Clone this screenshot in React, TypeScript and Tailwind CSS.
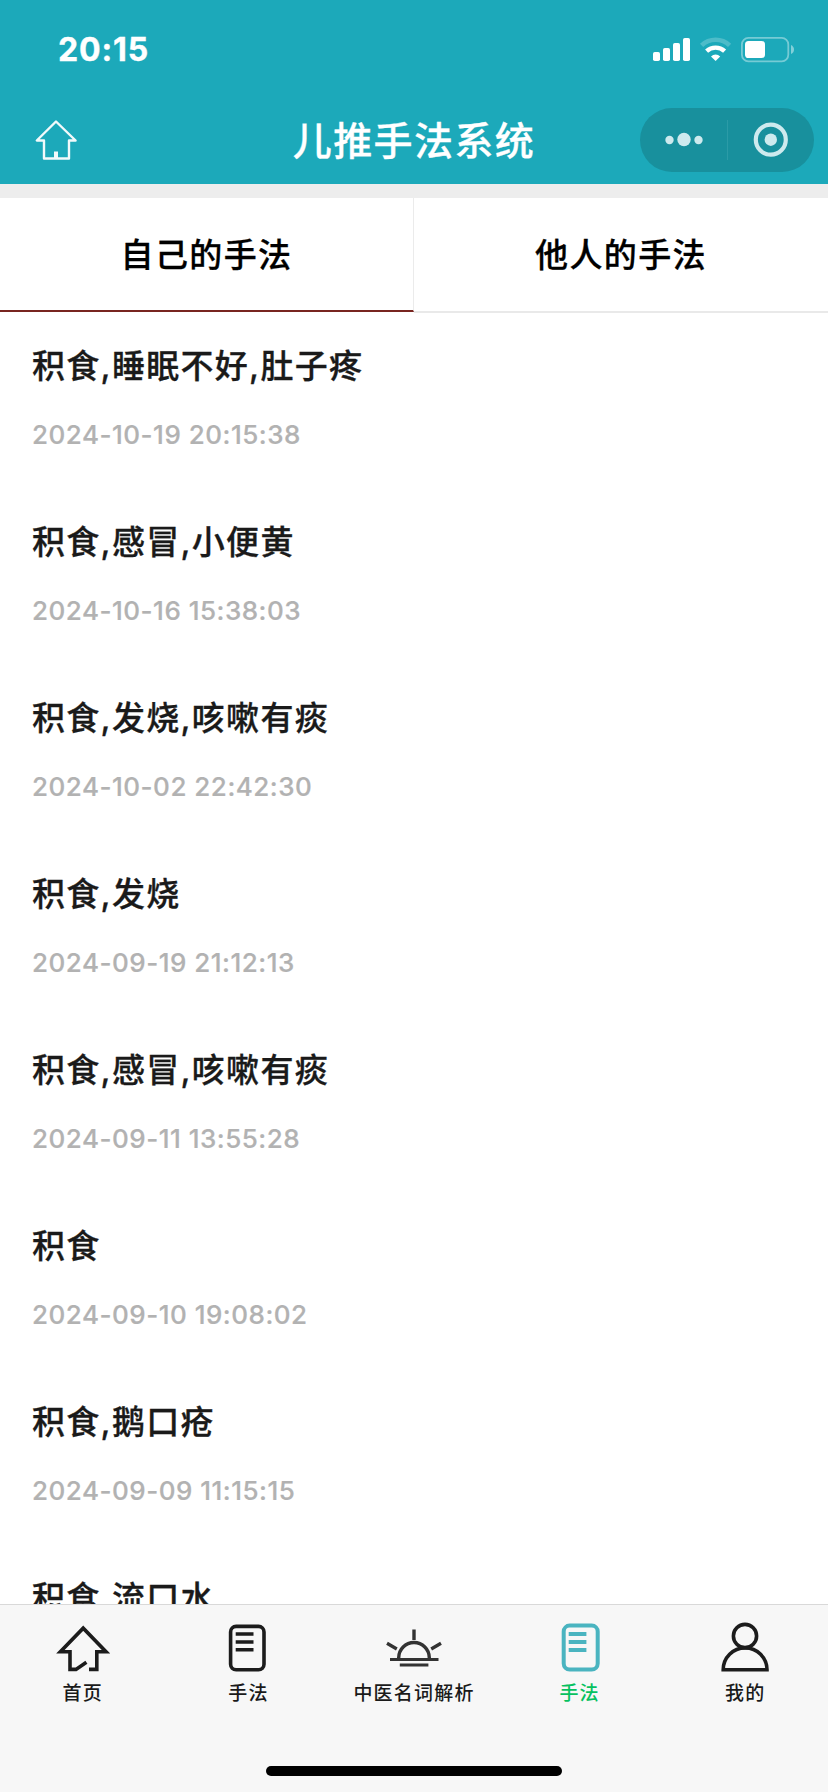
import { useState } from 'react'

const records = [
  { id: 1, title: '积食,睡眠不好,肚子疼', time: '2024-10-19 20:15:38' },
  { id: 2, title: '积食,感冒,小便黄', time: '2024-10-16 15:38:03' },
  { id: 3, title: '积食,发烧,咳嗽有痰', time: '2024-10-02 22:42:30' },
  { id: 4, title: '积食,发烧', time: '2024-09-19 21:12:13' },
  { id: 5, title: '积食,感冒,咳嗽有痰', time: '2024-09-11 13:55:28' },
  { id: 6, title: '积食', time: '2024-09-10 19:08:02' },
  { id: 7, title: '积食,鹅口疮', time: '2024-09-09 11:15:15' },
  { id: 8, title: '积食,流口水', time: '' },
]

const tabs = ['自己的手法', '他人的手法']

const HouseIcon = () => (
  <svg className="h-14 w-14" viewBox="0 0 56 56" fill="none" stroke="#1c1c1c" strokeWidth="3.6">
    <path d="M34 49.4h7.8V31.7H51L28.2 8.2 5.4 31.7H15v17.7h6l10.4-7.2" />
  </svg>
)

const NoteIcon = () => (
  <svg className="h-14 w-14" viewBox="0 0 56 56" fill="none" stroke="#1c1c1c" strokeWidth="3.6">
    <rect x="10.6" y="6.4" width="33.4" height="43.4" rx="5.5" />
    <path d="M15.7 14h17.8M15.7 22h17.8M15.7 29.8h17.8" />
  </svg>
)

const NoteActiveIcon = () => (
  <svg className="h-14 w-14" viewBox="0 0 56 56" fill="none" stroke="#4ab4c0" strokeWidth="4">
    <rect x="11.7" y="5.6" width="34" height="44" rx="6" />
    <path d="M16.7 14h17.7M16.7 22h17.7M16.7 30h17.7" />
  </svg>
)

const SunIcon = () => (
  <svg className="h-14 w-14" viewBox="0 0 56 56" fill="none" stroke="#333" strokeWidth="3.4">
    <path d="M28 9.5V20M1 23.3l9.8 5.6M55 23.3l-9.8 5.6" />
    <path d="M12.7 39v-1.2a15.3 15.3 0 0 1 30.6 0V39" />
    <path d="M4 39.6h48.5M13.8 45h28.6" strokeWidth="3" />
  </svg>
)

const UserIcon = () => (
  <svg className="h-14 w-14" viewBox="0 0 56 56" fill="none" stroke="#1c1c1c" strokeWidth="3.6">
    <circle cx="28" cy="16" r="11.6" />
    <path d="M6.2 49.8a21.8 21.8 0 0 1 43.8 0z" />
  </svg>
)

const menus = [
  { id: 'home', label: '首页', icon: <HouseIcon /> },
  { id: 'note', label: '手法', icon: <NoteIcon /> },
  { id: 'terms', label: '中医名词解析', icon: <SunIcon /> },
  { id: 'mine-note', label: '手法', icon: <NoteActiveIcon />, active: true },
  { id: 'me', label: '我的', icon: <UserIcon /> },
]

const StatusBar = () => (
  <div className="flex h-[100px] items-center justify-between pl-[58px] pr-[33px]">
    <span className="text-[32px] leading-none font-bold tracking-[0.9px] [-webkit-text-stroke:0.4px]">20:15</span>
    <svg className="h-[28px] w-[143px]" viewBox="652 36 143 28" fill="#fff">
      <rect x="653" y="52" width="7" height="9" rx="1.8" />
      <rect x="663" y="48" width="7" height="13" rx="1.8" />
      <rect x="673" y="43" width="7" height="18" rx="1.8" />
      <rect x="683" y="38" width="7" height="23" rx="1.8" />
      <path d="M701.6 45.4a20 20 0 0 1 28 0" fill="none" stroke="#fff" strokeOpacity=".22" strokeWidth="4.6" />
      <path d="M706.6 51.2a13.2 13.2 0 0 1 18 0" fill="none" stroke="#fff" strokeWidth="4.4" />
      <path d="M715.6 61l-4.6-4.6a6.8 6.8 0 0 1 9.2 0z" />
      <rect x="741.9" y="37.9" width="46.4" height="23.4" rx="6.5" fill="none" stroke="#fff" strokeOpacity=".4" strokeWidth="1.8" />
      <rect x="745" y="41" width="20" height="17" rx="3.6" />
      <path d="M791 45q3 1.5 3 4.5t-3 4.5z" fillOpacity=".45" />
    </svg>
  </div>
)

const NavBar = () => (
  <div className="grid h-[84px] grid-cols-[1fr_auto_1fr] items-center px-[14px] pb-[4px]">
    <svg className="ml-[21px] h-[42px] w-[42px]" viewBox="35 119 42 42" fill="none" stroke="#f2fafb" strokeWidth="2.4" strokeLinejoin="round">
      <path d="M56 121.5L36.8 140.5H44V158.5H69V140.5H75.6z" />
      <path d="M56 151.5V158" strokeWidth="4" />
    </svg>
    <h1 className="text-[39px] leading-none font-medium tracking-[1.4px] [-webkit-text-stroke:0.3px]">儿推手法系统</h1>
    <div className="flex h-16 w-[174px] items-center justify-self-end rounded-full bg-[#18909d]">
      <svg className="h-16 w-[174px]" viewBox="640 108 174 64" fill="#cdeaee">
        <circle cx="669.5" cy="140" r="4.2" />
        <circle cx="684" cy="139.5" r="6.7" />
        <circle cx="698.5" cy="140" r="4.2" />
        <path d="M727.5 120V160" stroke="#2b9ba7" />
        <circle cx="770.8" cy="139.7" r="15" fill="none" stroke="#cdeaee" strokeWidth="4.2" />
        <circle cx="770.8" cy="139.7" r="6.2" />
      </svg>
    </div>
  </div>
)

export default function App() {
  const [current, setCurrent] = useState(0)

  return (
    <main className="flex h-[1792px] w-[828px] flex-col overflow-hidden bg-white font-['Inter','Noto_Sans_CJK_SC',sans-serif]">
      <header className="h-[184px] shrink-0 bg-[#1ca9ba] text-white">
        <StatusBar />
        <NavBar />
      </header>

      <div className="h-[14px] shrink-0 bg-[#ededed]"></div>

      <div className="grid h-[115px] shrink-0 grid-cols-2">
        {tabs.map((tab, i) => (
          <button
            key={tab}
            onClick={() => setCurrent(i)}
            className={
              'flex items-center justify-center text-[33px] leading-none font-medium tracking-[1.4px] text-black [-webkit-text-stroke:0.3px] ' +
              (i === current
                ? 'mb-px border-b-2 border-r border-b-[#782520] border-r-[#ebebeb] pt-[2px]'
                : 'border-b-2 border-b-[#e9e9e9] pt-px')
            }
          >
            {tab}
          </button>
        ))}
      </div>

      <ul className="min-h-0 flex-1 overflow-hidden pl-8">
        {records.map((item) => (
          <li key={item.id} className="h-44 pt-[29px]">
            <h2 className="text-[33px] leading-[48px] font-medium tracking-[1.3px] text-[#1a1a1a] [-webkit-text-stroke:0.3px]">{item.title}</h2>
            <p className="mt-[27px] text-[26px] leading-[36px] font-medium tracking-[0.5px] text-[#b2b2b2] [-webkit-text-stroke:0.2px]">{item.time}</p>
          </li>
        ))}
      </ul>

      <footer className="flex h-[188px] shrink-0 flex-col items-center justify-between border-t border-[#d9d9d9] bg-[#f7f7f7] pt-[15px] pb-4">
        <nav className="grid w-full grid-cols-5">
          {menus.map((menu) => (
            <div key={menu.id} className="flex flex-col items-center">
              {menu.icon}
              <span
                className={
                  'mt-1 text-[19px] leading-[28px] font-medium tracking-[1.2px] ' +
                  (menu.active ? 'text-[#07c160]' : 'text-[#1a1a1a]')
                }
              >
                {menu.label}
              </span>
            </div>
          ))}
        </nav>
        <div className="h-[10px] w-[296px] rounded-full bg-black"></div>
      </footer>
    </main>
  )
}
